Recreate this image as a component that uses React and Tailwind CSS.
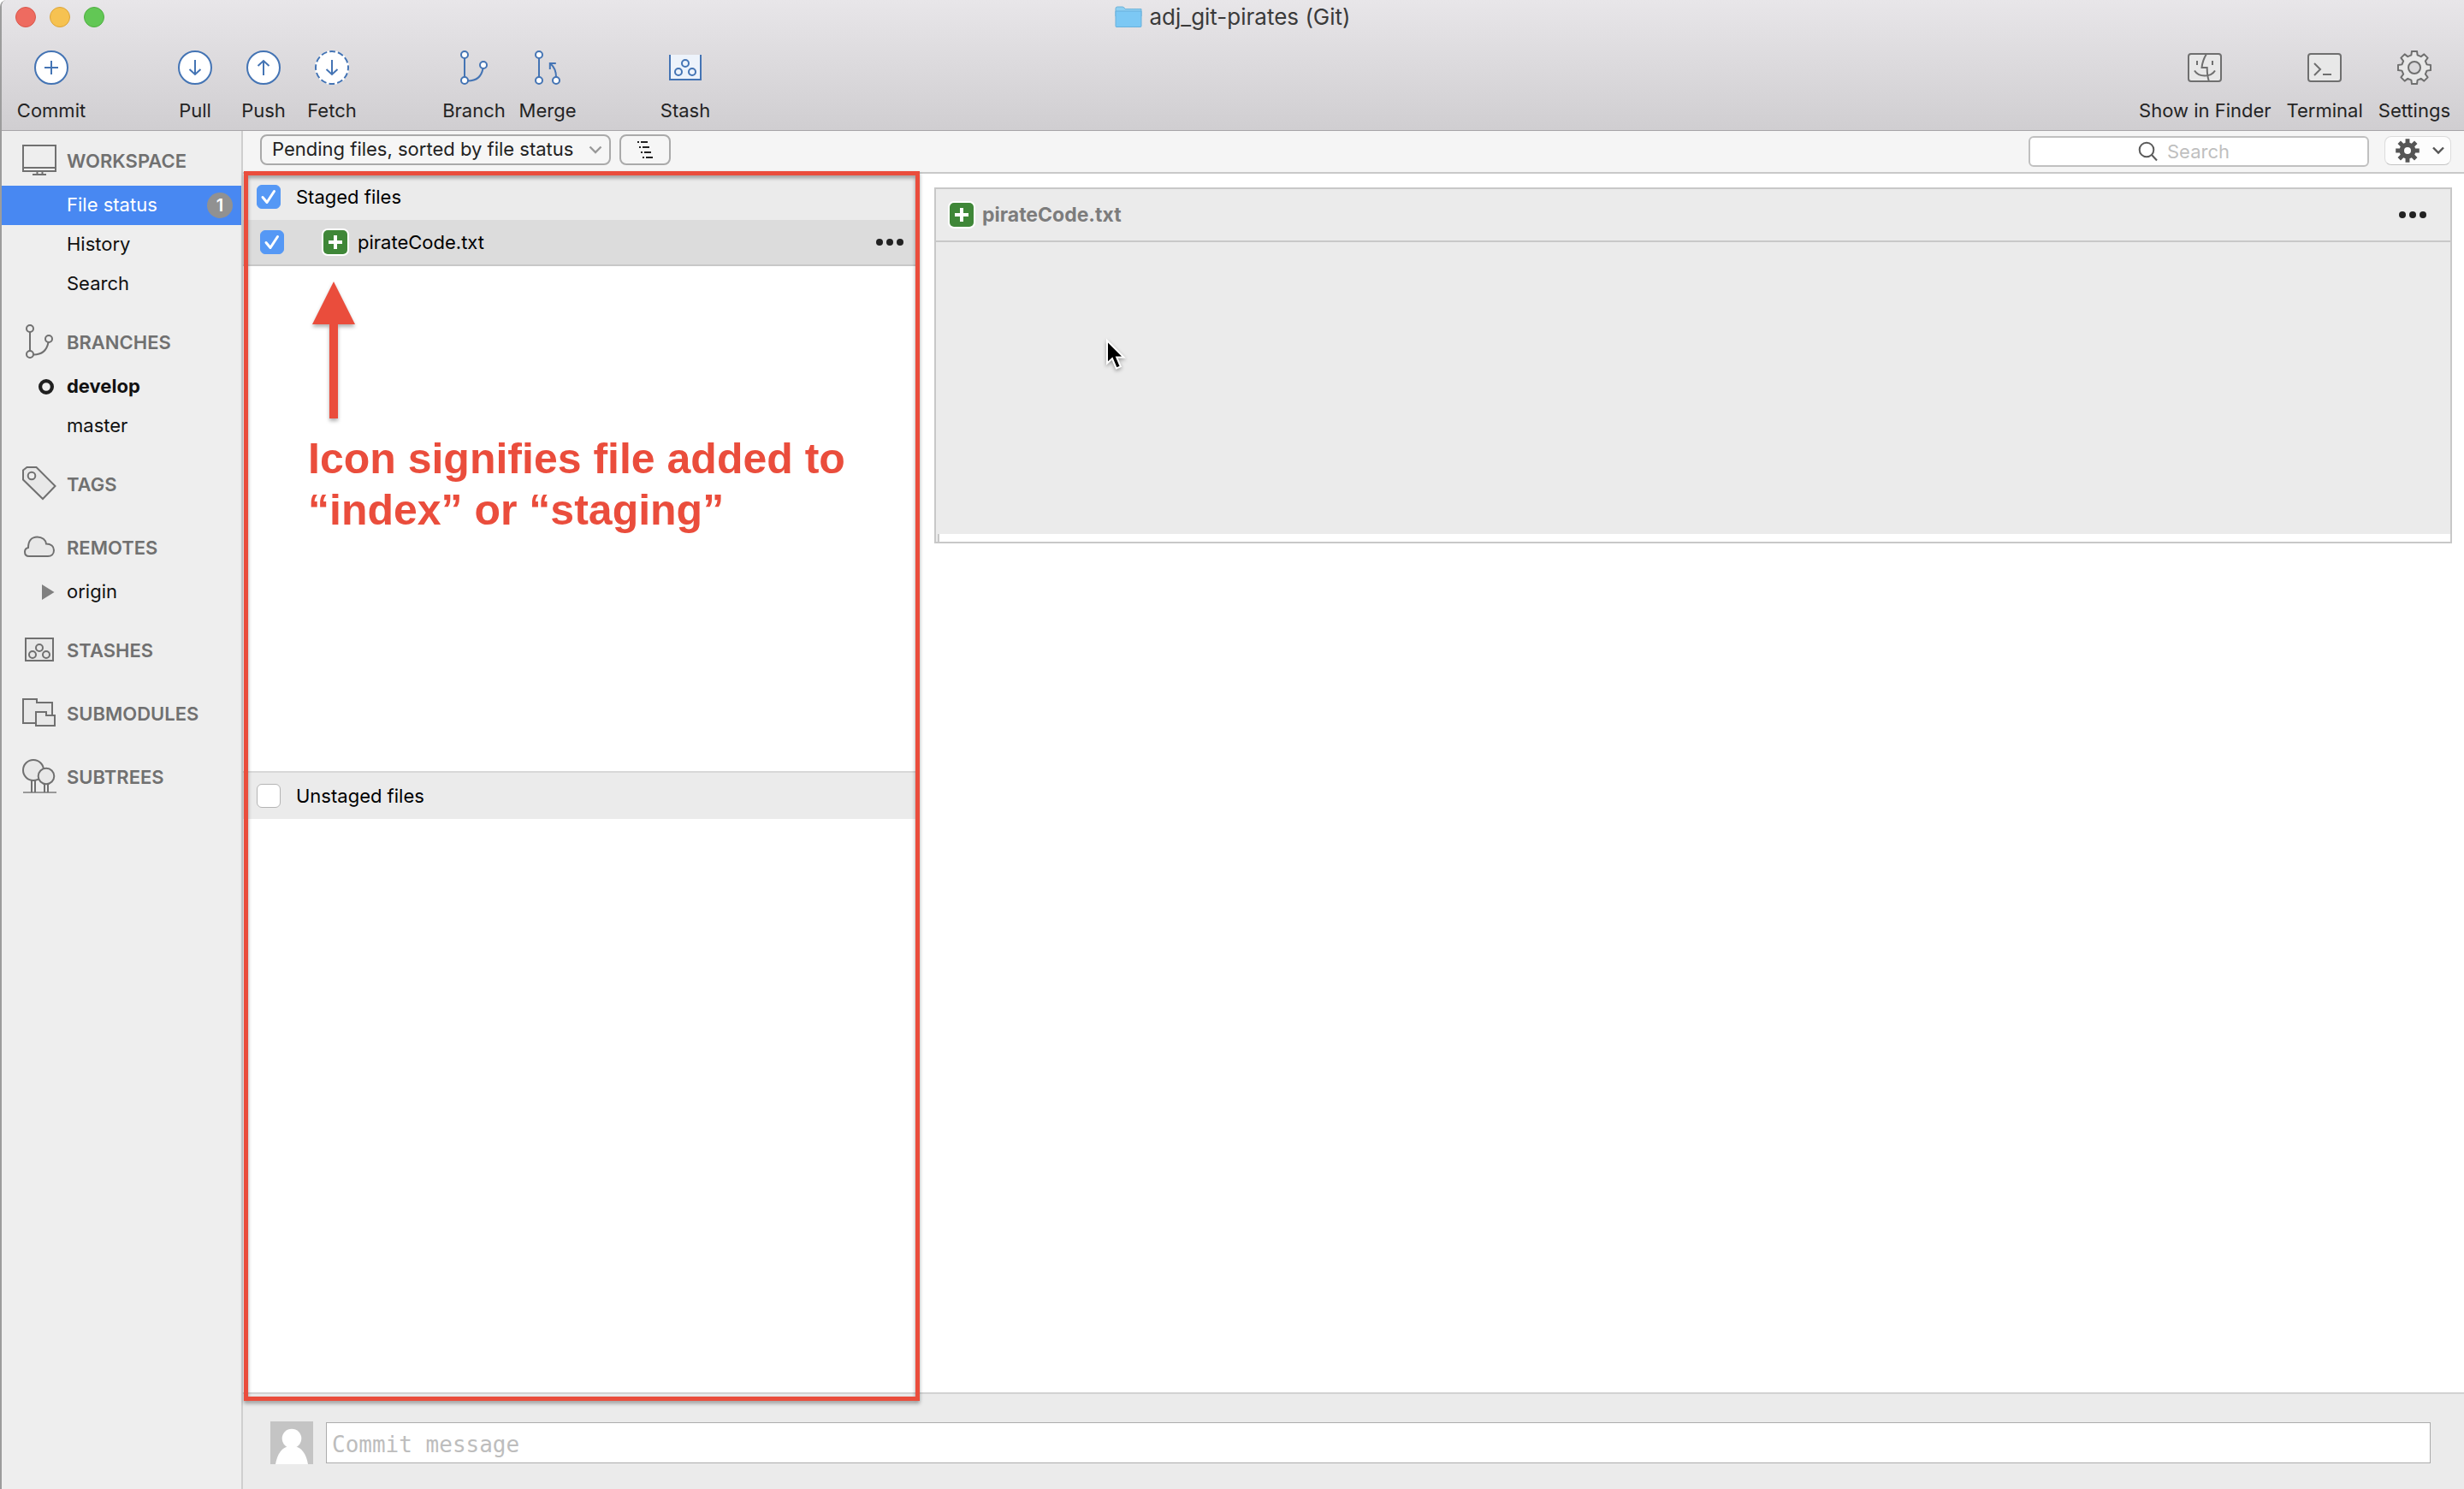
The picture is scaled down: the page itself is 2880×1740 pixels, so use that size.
import React, { useState } from "react";

/* Outline of a cog centred in a square box. */
function gearPath(c, outer, inner, teeth, topDeg, baseDeg) {
  const pt = (r, deg) => {
    const a = ((deg - 90) * Math.PI) / 180;
    return `${(c + r * Math.cos(a)).toFixed(2)} ${(c + r * Math.sin(a)).toFixed(2)}`;
  };
  const pts = [];
  for (let i = 0; i < teeth; i++) {
    const m = (360 / teeth) * i;
    pts.push(pt(inner, m - baseDeg), pt(outer, m - topDeg), pt(outer, m + topDeg), pt(inner, m + baseDeg));
  }
  return `M${pts.join(" L")} Z`;
}

function Icon({ children, className = "" }) {
  return (
    <svg viewBox="0 0 40 40" className={`size-10 shrink-0 ${className}`} fill="none" stroke="currentColor" strokeWidth="2" aria-hidden="true">
      {children}
    </svg>
  );
}

const CommitIcon = () => (
  <Icon>
    <circle cx="20" cy="20" r="19" fill="#fff" />
    <path d="M12 20H28M20 12V28" />
  </Icon>
);
const PullIcon = () => (
  <Icon>
    <circle cx="20" cy="20" r="19" fill="#fff" />
    <path d="M20 11V28M13.5 22L20 28L26.5 22" />
  </Icon>
);
const PushIcon = () => (
  <Icon>
    <circle cx="20" cy="20" r="19" fill="#fff" />
    <path d="M20 29V12M13.5 18L20 12L26.5 18" />
  </Icon>
);
const FetchIcon = () => (
  <Icon>
    <circle cx="20" cy="20" r="20" fill="#fff" stroke="none" />
    <circle cx="20" cy="20" r="19" strokeDasharray="6.95 3" strokeDashoffset="3.5" />
    <path d="M20 11V28M13.5 22L20 28L26.5 22" />
  </Icon>
);
const BranchIcon = ({ fill = "#fff" }) => (
  <Icon>
    <path d="M9 9V31M13 35.5C24 35.5 29 29 30.5 21" />
    <circle cx="9" cy="5" r="4" fill={fill} />
    <circle cx="9" cy="35" r="4" fill={fill} />
    <circle cx="31" cy="17" r="4" fill={fill} />
  </Icon>
);
const MergeIcon = () => (
  <Icon>
    <path d="M10 9V31M30 31C30 24 27.5 19 23.5 15.5M22.8 22V15H29.8" />
    <circle cx="10" cy="5" r="4" fill="#fff" />
    <circle cx="10" cy="35" r="4" fill="#fff" />
    <circle cx="30" cy="35" r="4" fill="#fff" />
  </Icon>
);
const StashIcon = () => (
  <Icon>
    <path d="M2 5V34H38V5" fill="#edf3fb" />
    <circle cx="20" cy="15" r="4" />
    <circle cx="12" cy="25" r="4" />
    <circle cx="28" cy="25" r="4" />
  </Icon>
);
const FinderIcon = () => (
  <Icon>
    <rect x="1" y="4" width="38" height="32" rx="3" fill="#e8e8e8" />
    <path d="M11 12V17M29 12V17M22 4C19 9 17 15 16.5 20H22.7C22.7 26 23 31 25 36M8 23.5C13 31.5 27 31.5 32 23.5" />
  </Icon>
);
const TerminalIcon = () => (
  <Icon>
    <rect x="1" y="4" width="38" height="32" rx="3" fill="#e8e8e8" />
    <path d="M8 15L15 22L8 29M18 28H28" />
  </Icon>
);
const SettingsIcon = () => (
  <Icon>
    <path d={gearPath(20, 19.3, 15, 8, 9, 14)} fill="#e8e8e8" strokeLinejoin="round" />
    <circle cx="20" cy="20" r="7" fill="#dad9db" />
  </Icon>
);

const WorkspaceIcon = () => (
  <Icon>
    <path d="M1 3H39V33H1ZM1 29H39M17.5 33V37M23.5 33V37M12 37H28" />
  </Icon>
);
const TagIcon = () => (
  <Icon>
    <path d="M1 4.5L5.5 1H16.5L38.5 23L24 38L1 15.5Z" fill="#e8e8e8" />
    <circle cx="11" cy="11" r="4.3" fill="#eee" />
  </Icon>
);
const CloudIcon = () => (
  <Icon>
    <path d="M8 31C4 31 3 28.5 3 26C3 23 4.5 21.5 7 21C7 13 11 8.5 17.5 8.5C23.5 8.5 27.5 12 28 16.5C33.5 16.5 37 19.5 37 24C37 28.5 34 31 30 31Z" fill="#e8e8e8" />
  </Icon>
);
const StashesIcon = () => (
  <Icon>
    <rect x="4" y="7" width="32" height="26" fill="#e8e8e8" />
    <circle cx="20" cy="18" r="4" />
    <circle cx="12" cy="26" r="4" />
    <circle cx="28" cy="26" r="4" />
  </Icon>
);
const SubmodulesIcon = () => (
  <Icon>
    <path d="M1 4H17V8H35V32H1Z" fill="#e8e8e8" />
    <path d="M16 19H28V23H38V35H16Z" fill="#e8e8e8" />
  </Icon>
);
const SubtreesIcon = () => (
  <Icon>
    <path d="M1 39H40" stroke="#999" />
    <path d="M11 25V39M15 25V39M26 29V39M30 29V39" />
    <circle cx="13" cy="13" r="12" fill="#e8e8e8" />
    <circle cx="28" cy="20" r="9.3" fill="#e8e8e8" />
  </Icon>
);

const CurrentMark = () => (
  <svg viewBox="0 0 20 20" className="size-5" aria-hidden="true">
    <circle cx="10" cy="10" r="6.9" fill="none" stroke="#1f1f1f" strokeWidth="4.2" />
  </svg>
);
const ExpandMark = () => (
  <svg viewBox="0 0 20 20" className="size-5" aria-hidden="true">
    <path d="M5 1L19.5 10L5 19Z" fill="#808080" />
  </svg>
);

function ToolButton({ icon, label, width = "", tone = "text-[#4474b4]" }) {
  return (
    <button type="button" className={`flex flex-col items-center ${width}`}>
      <span className={tone}>{icon}</span>
      <span className="mt-[15px] text-[22px] leading-[30px] whitespace-nowrap text-[#242424]">{label}</span>
    </button>
  );
}

function SectionTitle({ icon, children, first }) {
  return (
    <h2 className={`flex items-center gap-3 pl-6 text-[22px] leading-7 font-semibold text-[#707070] ${first ? "h-16 pt-1" : "h-[74px] pt-3.5"}`}>
      {icon}
      <span className="pt-0.5">{children}</span>
    </h2>
  );
}

function SideItem({ children, mark, active, bold, badge }) {
  return (
    <li>
      <a
        href="#"
        aria-current={active ? "page" : undefined}
        className={`flex h-[46px] items-center gap-3.5 pr-2.5 pl-[42px] text-[22px] leading-7 ${active ? "bg-[#4888f2] text-white" : "text-[#111]"} ${bold ? "font-bold" : ""}`}
      >
        <span className="flex w-5 justify-center">{mark}</span>
        <span className="flex-1 pb-0.5">{children}</span>
        {badge && (
          <span className="flex size-[30px] items-center justify-center rounded-full bg-[#919191] text-xl leading-none font-semibold text-white">
            {badge}
          </span>
        )}
      </a>
    </li>
  );
}

function CheckBox({ id, defaultChecked }) {
  return (
    <span className="grid size-7 shrink-0">
      <input
        id={id}
        type="checkbox"
        defaultChecked={defaultChecked}
        className="peer col-start-1 row-start-1 size-7 appearance-none rounded-md border border-[#b4b4b4] bg-white checked:border-[#5598f5] checked:bg-[#5598f5]"
      />
      <svg viewBox="0 0 28 28" className="pointer-events-none invisible col-start-1 row-start-1 size-7 peer-checked:visible" aria-hidden="true">
        <path d="M7 14.5L12 20.5L20.5 7.5" fill="none" stroke="#fff" strokeWidth="3" strokeLinecap="round" strokeLinejoin="round" />
      </svg>
    </span>
  );
}

const AddedIcon = () => (
  <svg viewBox="0 0 32 32" className="size-8 shrink-0" role="img" aria-label="Added">
    <rect width="32" height="32" rx="7" fill="#fff" />
    <rect x="2" y="2" width="28" height="28" rx="5" fill="#3f8738" />
    <path d="M16 8V24M8 16H24" stroke="#fff" strokeWidth="4" />
  </svg>
);

function MoreButton() {
  return (
    <button type="button" aria-label="More actions">
      <svg viewBox="0 0 32 8" className="h-2 w-8" fill="#222" aria-hidden="true">
        <circle cx="4" cy="4" r="4" />
        <circle cx="16" cy="4" r="4" />
        <circle cx="28" cy="4" r="4" />
      </svg>
    </button>
  );
}

function TitleBar() {
  return (
    <div className="grid h-10 grid-cols-[1fr_auto_1fr] items-center px-4">
      <div className="flex gap-4">
        <button type="button" aria-label="Close" className="size-6 rounded-full border border-[#d8574c] bg-[#ee6b60]" />
        <button type="button" aria-label="Minimise" className="size-6 rounded-full border border-[#dba43a] bg-[#f6c251]" />
        <button type="button" aria-label="Zoom" className="size-6 rounded-full border border-[#4eae40] bg-[#62c755]" />
      </div>
      <h1 className="flex items-center gap-2 text-[26px] leading-9 text-[#3a3a3a]">
        <svg viewBox="0 0 32 26" className="h-[26px] w-8" aria-hidden="true">
          <path d="M1 3Q1 1 3 1H9Q11 1 12 3.5H31V12H1Z" fill="#8fd0f2" stroke="#6fb3d9" />
          <path d="M1 6H31V23.5Q31 24.5 30 24.5H2Q1 24.5 1 23.5Z" fill="#7cc8f4" stroke="#68b0dc" />
        </svg>
        adj_git-pirates (Git)
      </h1>
    </div>
  );
}

function Toolbar() {
  const gray = "text-[#6f6f6f]";
  return (
    <div className="flex justify-between pt-[19px] pr-4 pb-2 pl-[18px]">
      <div className="flex">
        <ToolButton width="w-20" icon={<CommitIcon />} label="Commit" />
        <div className="ml-[88px] flex">
          <ToolButton width="w-20" icon={<PullIcon />} label="Pull" />
          <ToolButton width="w-20" icon={<PushIcon />} label="Push" />
          <ToolButton width="w-20" icon={<FetchIcon />} label="Fetch" />
        </div>
        <div className="ml-[83px] flex">
          <ToolButton width="w-[86px]" icon={<BranchIcon />} label="Branch" />
          <ToolButton width="w-[86px]" icon={<MergeIcon />} label="Merge" />
        </div>
        <div className="ml-[78px] flex">
          <ToolButton width="w-20" icon={<StashIcon />} label="Stash" />
        </div>
      </div>
      <div className="flex gap-[18px]">
        <ToolButton tone={gray} icon={<FinderIcon />} label="Show in Finder" />
        <ToolButton tone={gray} icon={<TerminalIcon />} label="Terminal" />
        <ToolButton tone={gray} icon={<SettingsIcon />} label="Settings" />
      </div>
    </div>
  );
}

function Sidebar() {
  return (
    <nav className="w-[282px] shrink-0 border-r-2 border-[#cfcfcf] bg-[#eeeeee]">
      <SectionTitle first icon={<WorkspaceIcon />}>WORKSPACE</SectionTitle>
      <ul>
        <SideItem active badge="1">File status</SideItem>
        <SideItem>History</SideItem>
        <SideItem>Search</SideItem>
      </ul>
      <SectionTitle icon={<BranchIcon fill="#eee" />}>BRANCHES</SectionTitle>
      <ul>
        <SideItem bold mark={<CurrentMark />}>develop</SideItem>
        <SideItem>master</SideItem>
      </ul>
      <SectionTitle icon={<TagIcon />}>TAGS</SectionTitle>
      <SectionTitle icon={<CloudIcon />}>REMOTES</SectionTitle>
      <ul>
        <SideItem mark={<ExpandMark />}>origin</SideItem>
      </ul>
      <SectionTitle icon={<StashesIcon />}>STASHES</SectionTitle>
      <SectionTitle icon={<SubmodulesIcon />}>SUBMODULES</SectionTitle>
      <SectionTitle icon={<SubtreesIcon />}>SUBTREES</SectionTitle>
    </nav>
  );
}

function FilterBar() {
  return (
    <div className="flex h-[50px] shrink-0 items-start border-b-2 border-[#c9c9c9] bg-[#f5f5f5] pt-1 pr-[15px] pl-5">
      <div className="grid items-center">
        <select
          aria-label="File filter"
          className="col-start-1 row-start-1 h-9 w-[410px] appearance-none rounded-lg border-2 border-[#aaaaaa] bg-[#f6f6f6] pr-10 pb-0.5 pl-3 text-[22px] leading-7 text-[#222]"
        >
          <option>Pending files, sorted by file status</option>
        </select>
        <svg viewBox="0 0 16 10" className="pointer-events-none col-start-1 row-start-1 mr-2.5 h-2.5 w-4 justify-self-end" aria-hidden="true">
          <path d="M1.5 1.5L8 8L14.5 1.5" fill="none" stroke="#999" strokeWidth="2.4" />
        </svg>
      </div>
      <button type="button" aria-label="View options" className="ml-2.5 flex h-9 w-[60px] items-center justify-center rounded-lg border-2 border-[#aaaaaa] bg-[#f6f6f6]">
        <svg viewBox="0 0 18 20" className="h-5 w-[18px]" stroke="#222" strokeWidth="2" aria-hidden="true">
          <path d="M0 1H2M4 1H12M2 7H4M6 7H14M4 13H6M8 13H16M6 19H8M10 19H18" />
        </svg>
      </button>
      <div className="mt-0.5 ml-auto grid items-center">
        <input
          type="search"
          aria-label="Search"
          placeholder="Search"
          className="col-start-1 row-start-1 h-9 w-[398px] rounded-md border-2 border-[#c0c0c0] bg-white pl-40 text-[22px] leading-7 placeholder:text-[#bfbfbf] focus:outline-none"
        />
        <svg viewBox="0 0 24 24" className="pointer-events-none col-start-1 row-start-1 ml-32 size-6" fill="none" stroke="#5a5a5a" strokeWidth="2" aria-hidden="true">
          <circle cx="10" cy="10" r="8.3" />
          <path d="M16 16L22 22.5" />
        </svg>
      </div>
      <button type="button" aria-label="Actions" className="mt-0.5 ml-[18px] flex h-[34px] w-[78px] items-center justify-between rounded-lg border border-[#dcdcdc] border-b-[#c4c4c4] bg-[#fdfdfd] pr-1.5 pl-3">
        <svg viewBox="0 0 28 28" className="size-7" aria-hidden="true">
          <path d={gearPath(14, 14, 9.5, 8, 10, 15)} fill="#555" />
          <circle cx="14" cy="14" r="4" fill="#fdfdfd" />
        </svg>
        <svg viewBox="0 0 16 10" className="h-2.5 w-4" aria-hidden="true">
          <path d="M2 1.5L8 7.5L14 1.5" fill="none" stroke="#555" strokeWidth="2.4" />
        </svg>
      </button>
    </div>
  );
}

function Annotation() {
  return (
    <div className="pt-[18px] pl-[76px] text-[#ea4d3c]">
      <svg viewBox="0 0 50 160" className="ml-[5px] h-40 w-[50px] drop-shadow-[0_3px_2px_rgba(0,0,0,0.3)]" fill="currentColor" aria-hidden="true">
        <path d="M25 0L50 50H30V160H20V50H0Z" />
      </svg>
      <p className="mt-[17px] font-['Liberation_Sans',Arial,sans-serif] text-[50px] leading-[60px] font-bold whitespace-nowrap">
        Icon signifies file added to
        <br />
        “index” or “staging”
      </p>
    </div>
  );
}

function FilePanel() {
  return (
    <section className="relative flex w-[790px] shrink-0 flex-col bg-white text-[22px] leading-7 text-black">
      <div className="flex h-[49%] flex-col">
        <div className="flex h-[54px] items-center gap-[18px] bg-[#ebebeb] pl-4">
          <CheckBox id="staged" defaultChecked />
          <label htmlFor="staged">Staged files</label>
        </div>
        <div className="flex h-[54px] items-center border-b-2 border-[#c8c8c8] bg-[#dcdcdc] pr-[18px] pl-5">
          <CheckBox id="pirate-code" defaultChecked />
          <span className="ml-11 flex">
            <AddedIcon />
          </span>
          <label htmlFor="pirate-code" className="ml-2.5 flex-1">pirateCode.txt</label>
          <MoreButton />
        </div>
        <Annotation />
      </div>
      <div className="flex-1">
        <div className="flex h-14 items-center gap-[18px] border-t-2 border-[#d8d8d8] bg-[#ebebeb] pl-4">
          <CheckBox id="unstaged" />
          <label htmlFor="unstaged">Unstaged files</label>
        </div>
      </div>
      {/* Highlight frame laid over the file lists */}
      <div className="pointer-events-none absolute -top-[3px] -right-px -bottom-2.5 left-px z-10 border-5 border-[#ea4d3c] drop-shadow-[0_3px_2px_rgba(0,0,0,0.35)]" />
    </section>
  );
}

function DiffPanel() {
  return (
    <section className="min-w-0 flex-1 bg-white pt-4 pr-3.5 pl-[18px]">
      <div className="relative border-2 border-[#c8c8c8] bg-[#ebebeb]">
        <div className="flex h-[62px] items-center border-b-2 border-[#c8c8c8] pr-7 pl-3.5">
          <AddedIcon />
          <h2 className="ml-2 flex-1 text-[23px] leading-7 font-bold text-[#7c7c7c]">pirateCode.txt</h2>
          <MoreButton />
        </div>
        <div className="h-[341px]" />
        <div className="ml-0.5 h-[9px] border-l-2 border-[#c8c8c8] bg-white" />
        {/* Mouse pointer */}
        <svg viewBox="0 0 26 40" className="pointer-events-none absolute top-[173px] left-[198px] h-10 w-[26px] drop-shadow-[0_2px_2px_rgba(0,0,0,0.35)]" aria-hidden="true">
          <path d="M2 4L2 30.5L8 25L12.8 36.5L17.8 34.3L13.2 23.5H21.5Z" fill="#000" stroke="#fff" strokeWidth="2" />
        </svg>
      </div>
    </section>
  );
}

function CommitBar() {
  const [message, setMessage] = useState("");
  return (
    <footer className="flex h-[113px] shrink-0 items-start gap-[15px] border-t-2 border-[#d2d2d2] bg-[#ebebeb] pt-8 pr-[39px] pl-8">
      <svg viewBox="0 0 50 50" className="size-[50px] shrink-0" role="img" aria-label="Author">
        <rect width="50" height="50" fill="#c4c4c4" />
        <circle cx="25" cy="20" r="11.3" fill="#fff" />
        <path d="M6 50C8 38 14 30 21 29.5H29C36 30 42 38 44 50Z" fill="#fff" />
      </svg>
      <input
        type="text"
        aria-label="Commit message"
        placeholder="Commit message"
        value={message}
        onChange={(e) => setMessage(e.target.value)}
        className="mt-px h-12 min-w-0 flex-1 border border-[#acacac] bg-white px-1.5 pt-1 font-['DejaVu_Sans_Mono',monospace] text-[26px] leading-8 placeholder:text-[#bdbdbd] focus:outline-none"
      />
    </footer>
  );
}

export default function App() {
  return (
    <div className="flex min-h-screen flex-col overflow-hidden rounded-tl-lg border-l-2 border-[#9c9c9c] bg-white font-['Inter',sans-serif]">
      <header className="shrink-0 border-b border-[#a7a5a8] bg-linear-to-b from-[#e8e6e9] to-[#d0ced1]">
        <TitleBar />
        <Toolbar />
      </header>
      <div className="flex flex-1">
        <Sidebar />
        <main className="flex min-w-0 flex-1 flex-col">
          <FilterBar />
          <div className="flex flex-1">
            <FilePanel />
            <DiffPanel />
          </div>
          <CommitBar />
        </main>
      </div>
    </div>
  );
}
